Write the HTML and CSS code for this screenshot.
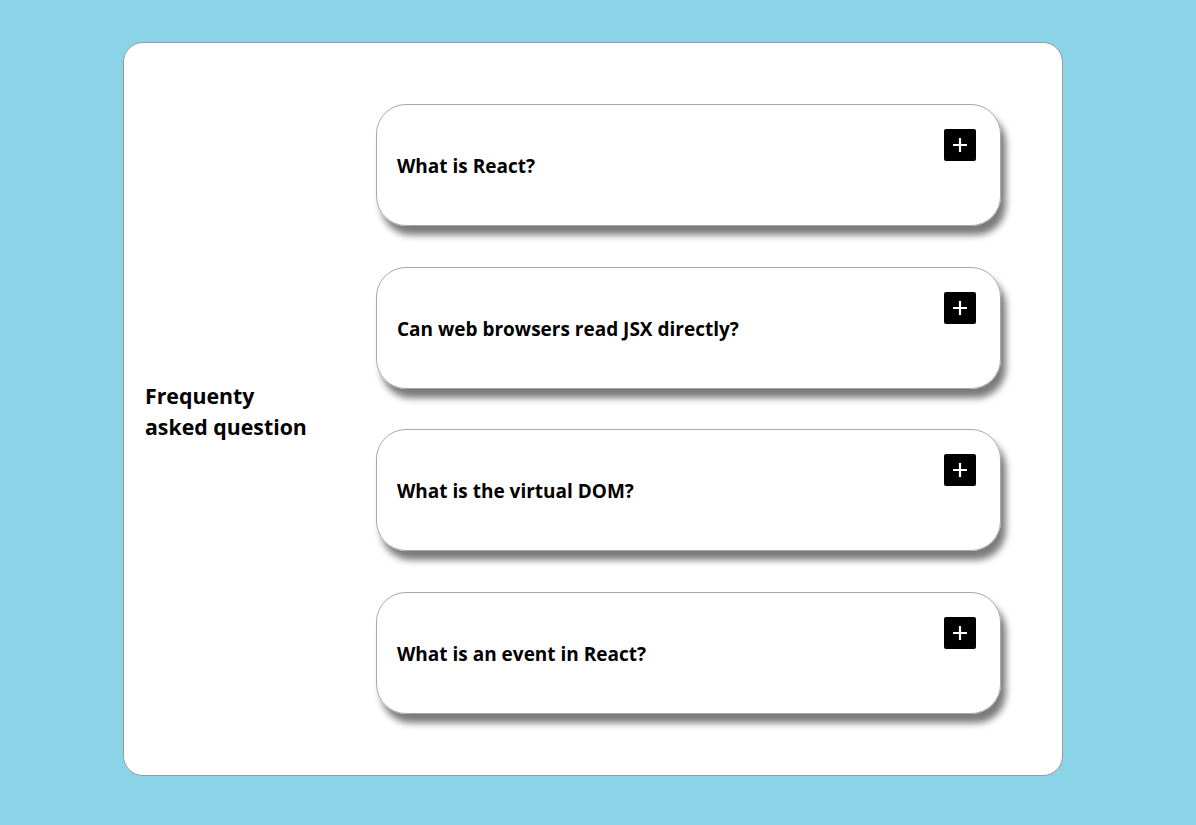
FILE: index.html
```html
<!DOCTYPE html>
<html>
<head>
<meta charset="utf-8">
<link rel="stylesheet" href="styles.css">
</head>
<body>
<div class="page">
  <div class="faq">
    <h2 class="faq-title">Frequenty asked question</h2>
    <div class="faq-list">
      <div class="faq-item">
        <p class="faq-q">What is React?</p>
        <button class="faq-btn" aria-label="expand"><svg viewBox="0 0 32 32" width="32" height="32"><path d="M16 9v14M9 16h14" stroke="#fff" stroke-width="2.2" fill="none"/></svg></button>
      </div>
      <div class="faq-item">
        <p class="faq-q">Can web browsers read JSX directly?</p>
        <button class="faq-btn" aria-label="expand"><svg viewBox="0 0 32 32" width="32" height="32"><path d="M16 9v14M9 16h14" stroke="#fff" stroke-width="2.2" fill="none"/></svg></button>
      </div>
      <div class="faq-item">
        <p class="faq-q">What is the virtual DOM?</p>
        <button class="faq-btn" aria-label="expand"><svg viewBox="0 0 32 32" width="32" height="32"><path d="M16 9v14M9 16h14" stroke="#fff" stroke-width="2.2" fill="none"/></svg></button>
      </div>
      <div class="faq-item">
        <p class="faq-q">What is an event in React?</p>
        <button class="faq-btn" aria-label="expand"><svg viewBox="0 0 32 32" width="32" height="32"><path d="M16 9v14M9 16h14" stroke="#fff" stroke-width="2.2" fill="none"/></svg></button>
      </div>
    </div>
  </div>
</div>
</body>
</html>
```

FILE: styles.css
```css
html, body {
  margin: 0;
  padding: 0;
}
body {
  background: #8bd3e6;
  font-family: "Open Sans", "Noto Sans", Arial, sans-serif;
  color: #000;
}
.page {
  width: 1196px;
  height: 825px;
  padding-top: 42px;
  box-sizing: border-box;
}
.faq {
  margin-left: 123px;
  width: 940px;
  height: 734px;
  box-sizing: border-box;
  background: #fff;
  border: 1px solid #9a9a9a;
  border-radius: 20px;
  display: flex;
  align-items: center;
  padding: 0 61px 0 21px;
}
.faq-title {
  width: 172px;
  margin: 0;
  padding-top: 4px;
  font-size: 21.3px;
  line-height: 31px;
  font-weight: 700;
  flex: none;
}
.faq-list {
  margin-left: auto;
  width: 625px;
  display: flex;
  flex-direction: column;
  gap: 40.5px;
}
.faq-item {
  height: 122px;
  box-sizing: border-box;
  border: 1px solid #a8a8a8;
  border-radius: 30px;
  box-shadow: 5px 9px 7px rgba(0, 0, 0, 0.52);
  display: flex;
  align-items: center;
  padding: 0 24px 0 20px;
  position: relative;
}
.faq-q {
  margin: 0;
  padding-top: 2px;
  font-size: 19px;
  font-weight: 700;
  flex: 1;
}
.faq-btn {
  align-self: flex-start;
  margin-top: 24px;
  width: 32px;
  height: 32px;
  padding: 0;
  border: none;
  border-radius: 2px;
  background: #000;
  display: flex;
  align-items: center;
  justify-content: center;
  cursor: pointer;
}
```
